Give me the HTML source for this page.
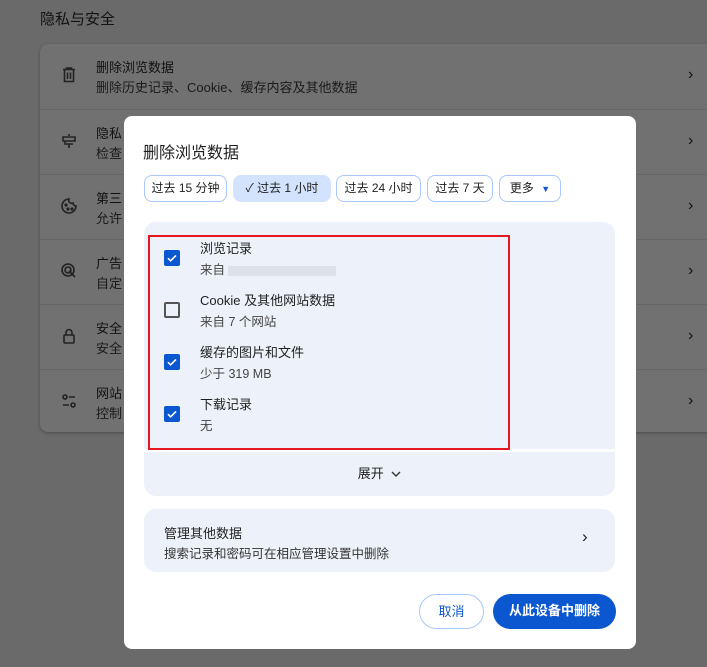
<!DOCTYPE html>
<html><head><meta charset="utf-8"><style>
*{box-sizing:border-box;margin:0;padding:0}
body{width:707px;height:667px;overflow:hidden;background:#6a6a6a;font-family:"Liberation Sans","Noto Sans CJK SC",sans-serif;position:relative;color:#1f1f1f}
.abs{position:absolute}
.sec{left:40px;top:8px;font-size:15px;color:#111}
.card{left:40px;top:44px;width:690px;height:388px;background:#717171;border-radius:8px;box-shadow:0 1px 3px rgba(0,0,0,.3)}
.row{position:absolute;left:0;width:100%;height:65px;border-top:1px solid #666}
.row:first-child{border-top:none}
.row .t{position:absolute;left:56px;top:13px;font-size:13px;color:#111;white-space:nowrap}
.row .s{position:absolute;left:56px;top:33px;font-size:13px;color:#1a1a1a;white-space:nowrap}
.row .ch{position:absolute;left:648px;top:22px;font-size:16px;color:#111}
.row svg{position:absolute;left:20px;top:22px}
.dlg{left:124px;top:116px;width:512px;height:533px;background:#fff;border-radius:8px}
.title{left:19px;top:23px;font-size:16px;color:#1f1f1f}
.chip{position:absolute;top:59px;height:27px;border:1px solid #a8c7fa;border-radius:8px;font-size:12px;line-height:25px;padding:0;text-align:center;color:#1f1f1f;white-space:nowrap}
.panel{left:20px;top:106px;width:471px;height:227px;background:#edf2fa;border-radius:12px 12px 0 0}
.red{left:24px;top:119px;width:362px;height:215px;border:2px solid #e5161f}
.cb{position:absolute;left:40px;width:16px;height:16px;border-radius:2px;background:#0b57d0}
.cb.off{background:none;border:2px solid #555}
.lt{position:absolute;left:76px;font-size:13px;color:#1f1f1f;white-space:nowrap}
.ls{position:absolute;left:76px;font-size:12.5px;color:#444;white-space:nowrap}
.exp{left:20px;top:336px;width:471px;height:44px;background:#edf2fa;border-radius:0 0 12px 12px;text-align:center;font-size:13px;line-height:44px}
.mg{left:20px;top:393px;width:471px;height:63px;background:#edf2fa;border-radius:12px}
.btn{position:absolute;top:478px;height:35px;border-radius:18px;font-size:13px;line-height:33px;text-align:center}
</style></head><body>
<div class="abs sec">隐私与安全</div>
<div class="abs card">
 <div class="row" style="top:0"><svg width="18" height="18" viewBox="0 0 18 18" fill="none" stroke="#222" stroke-width="1.6"><path d="M3 3.5h12M6.5 3V2h5v1M4.5 4v11.5h9V4M7.5 6.5v6.5M10.5 6.5v6.5"/></svg><div class="t">删除浏览数据</div><div class="s">删除历史记录、Cookie、缓存内容及其他数据</div><div class="ch">›</div></div>
 <div class="row" style="top:65px"><svg width="18" height="18" viewBox="0 0 18 18" fill="none" stroke="#222" stroke-width="1.6"><path d="M9 2v2M3 5h12v4H3zM5 9v3h8M9 12v4"/></svg><div class="t">隐私</div><div class="s">检查</div><div class="ch">›</div></div>
 <div class="row" style="top:130px"><svg width="18" height="18" viewBox="0 0 18 18" fill="none" stroke="#222" stroke-width="1.6"><path d="M9 2a7 7 0 1 0 7 7 3 3 0 0 1-3-3 3 3 0 0 1-4-4z"/><circle cx="6" cy="8" r=".8"/><circle cx="8" cy="12" r=".8"/><circle cx="12" cy="12" r=".8"/></svg><div class="t">第三</div><div class="s">允许</div><div class="ch">›</div></div>
 <div class="row" style="top:195px"><svg width="18" height="18" viewBox="0 0 18 18" fill="none" stroke="#222" stroke-width="1.6"><circle cx="8" cy="8" r="6"/><circle cx="8" cy="8" r="3"/><path d="M9 9l6 6"/></svg><div class="t">广告</div><div class="s">自定</div><div class="ch">›</div></div>
 <div class="row" style="top:260px"><svg width="18" height="18" viewBox="0 0 18 18" fill="none" stroke="#222" stroke-width="1.6"><rect x="4" y="8" width="10" height="8" rx="1"/><path d="M6 8V5.5a3 3 0 0 1 6 0V8"/></svg><div class="t">安全</div><div class="s">安全</div><div class="ch">›</div></div>
 <div class="row" style="top:325px"><svg width="18" height="18" viewBox="0 0 18 18" fill="none" stroke="#222" stroke-width="1.6"><circle cx="5" cy="5" r="2"/><path d="M9 5h6M3 13h6"/><circle cx="13" cy="13" r="2"/></svg><div class="t">网站</div><div class="s">控制</div><div class="ch">›</div></div>
</div>
<div class="abs dlg">
 <div class="abs title">删除浏览数据</div>
 <div class="chip" style="left:20px;width:83px">过去 15 分钟</div>
 <div class="chip" style="left:109px;width:98px;background:#d3e3fd;border-color:#d3e3fd">✓ 过去 1 小时</div>
 <div class="chip" style="left:212px;width:85px">过去 24 小时</div>
 <div class="chip" style="left:303px;width:66px">过去 7 天</div>
 <div class="chip" style="left:375px;width:62px">更多 <span style="color:#0b57d0;font-size:9px;margin-left:4px">▼</span></div>
 <div class="abs panel"></div>
 <div class="cb" style="top:134px"><svg width="16" height="16" viewBox="0 0 16 16"><path d="M4 8.2l2.6 2.6L12 5.4" stroke="#fff" stroke-width="1.6" fill="none"/></svg></div>
 <div class="lt" style="top:122px">浏览记录</div><div class="ls" style="top:143px">来自 <span style="display:inline-block;width:108px;height:10px;background:#dde1e8;vertical-align:middle"></span></div>
 <div class="cb off" style="top:186px"></div>
 <div class="lt" style="top:174px">Cookie 及其他网站数据</div><div class="ls" style="top:195px">来自 7 个网站</div>
 <div class="cb" style="top:238px"><svg width="16" height="16" viewBox="0 0 16 16"><path d="M4 8.2l2.6 2.6L12 5.4" stroke="#fff" stroke-width="1.6" fill="none"/></svg></div>
 <div class="lt" style="top:226px">缓存的图片和文件</div><div class="ls" style="top:247px">少于 319 MB</div>
 <div class="cb" style="top:290px"><svg width="16" height="16" viewBox="0 0 16 16"><path d="M4 8.2l2.6 2.6L12 5.4" stroke="#fff" stroke-width="1.6" fill="none"/></svg></div>
 <div class="lt" style="top:278px">下载记录</div><div class="ls" style="top:299px">无</div>
 <div class="abs red"></div>
 <div class="abs exp">展开 <svg width="10" height="8" viewBox="0 0 10 8" style="margin-left:4px"><path d="M1 2l4 4 4-4" stroke="#333" stroke-width="1.4" fill="none"/></svg></div>
 <div class="abs mg"><div class="lt" style="left:20px;top:14px">管理其他数据</div><div class="ls" style="left:20px;top:34px;color:#333">搜索记录和密码可在相应管理设置中删除</div><div class="abs" style="left:438px;top:18px;font-size:17px">›</div></div>
 <div class="btn" style="left:295px;width:65px;border:1px solid #a8c7fa;color:#0b57d0">取消</div>
 <div class="btn" style="left:369px;width:123px;background:#0b57d0;color:#fff;font-weight:bold">从此设备中删除</div>
</div>
</body></html>
